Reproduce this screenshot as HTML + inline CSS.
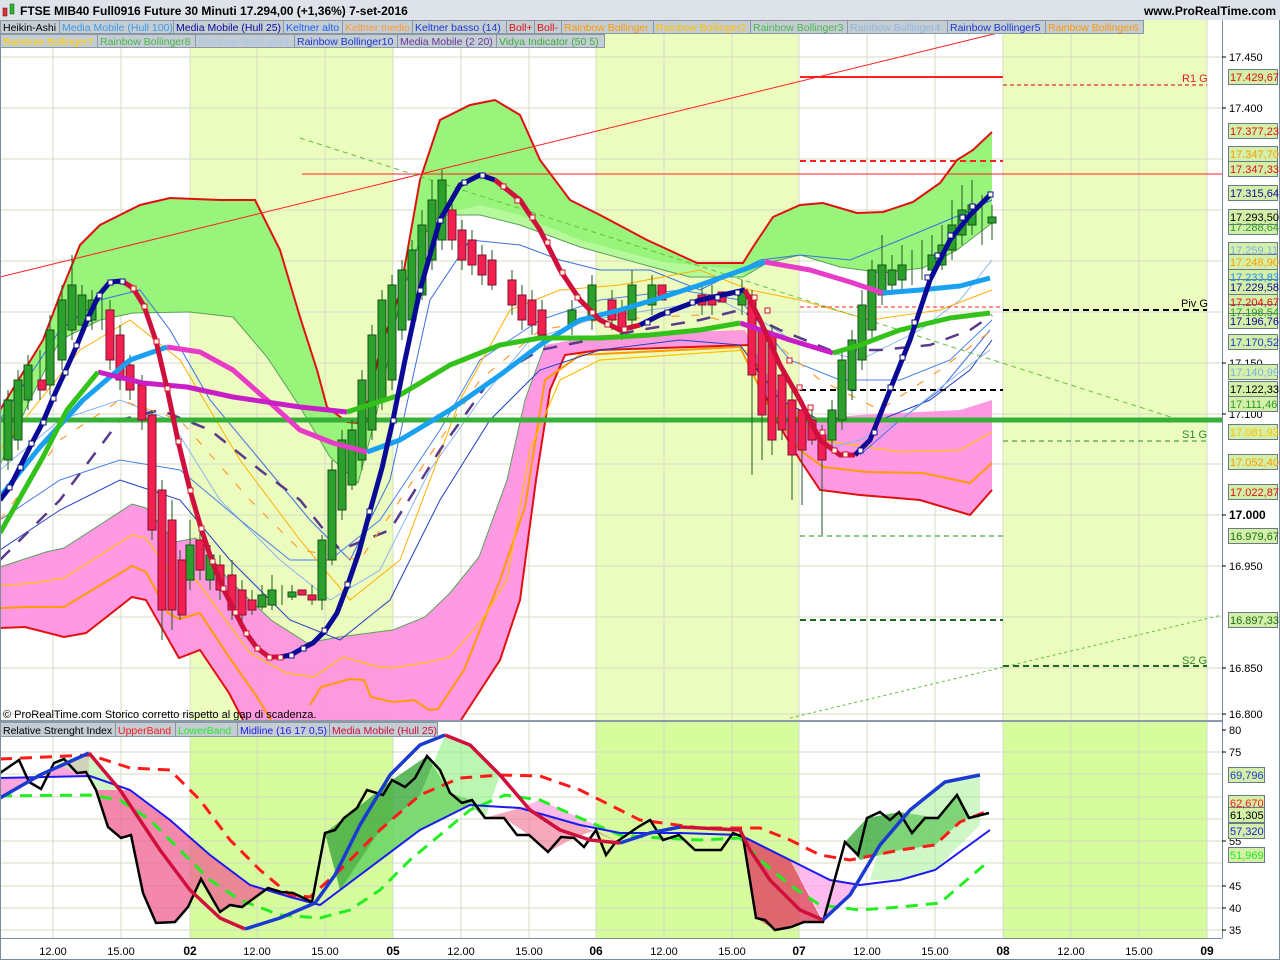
<!DOCTYPE html>
<html><head><meta charset="utf-8"><style>
body{margin:0;background:#fff;width:1280px;height:960px;overflow:hidden;font-family:"Liberation Sans",sans-serif}
svg{display:block}
</style></head><body>
<svg width="1280" height="960" viewBox="0 0 1280 960" xmlns="http://www.w3.org/2000/svg" font-family="Liberation Sans, sans-serif">
<rect width="1280" height="960" fill="#fff"/>
<g fill="#ecfcbe">
<rect x="190" y="20" width="203" height="700"/><rect x="596" y="20" width="203" height="700"/><rect x="1003" y="20" width="204" height="700"/>
</g>
<g fill="#d6fc9e">
<rect x="190" y="722" width="203" height="216"/><rect x="596" y="722" width="203" height="216"/><rect x="1003" y="722" width="204" height="216"/>
</g>
<g stroke="#d4dcc4" stroke-width="1">
<path d="M53 20V938M121 20V938M190 20V938M257 20V938M325 20V938M393 20V938M461 20V938M529 20V938M596 20V938M664 20V938M732 20V938M799 20V938M867 20V938M935 20V938M1003 20V938M1071 20V938M1139 20V938M1207 20V938"/>
<path d="M0 57H1222M0 108H1222M0 159H1222M0 210H1222M0 261H1222M0 312H1222M0 363H1222M0 414H1222M0 464H1222M0 515H1222M0 566H1222M0 617H1222M0 668H1222M0 714H1222"/>
<path d="M0 752H1222M0 774H1222M0 797H1222M0 819H1222M0 841H1222M0 863H1222M0 886H1222M0 908H1222M0 930H1222"/>
</g>
<path d="M0 410 L43 340 L63 287 L80 245 L100 225 L140 205 L170 198 L220 200 L255 200 L280 250 L300 317 L317 370 L327 407 L347 422 L358 423 L370 397 L380 350 L400 293 L420 180 L440 120 L470 105 L495 100 L520 115 L540 160 L570 200 L600 215 L647 240 L697 263 L743 263 L753 247 L773 217 L800 205 L823 203 L857 213 L883 212 L913 202 L940 183 L957 160 L973 150 L992 132 L992 223 L957 250 L923 268 L883 273 L840 267 L800 255 L767 263 L743 277 L690 277 L663 270 L580 247 L520 225 L480 215 L440 215 L420 240 L400 300 L380 400 L367 450 L358 483 L330 457 L300 407 L267 357 L233 317 L190 312 L133 313 L100 320 L60 340 L30 400 L0 465 Z" fill="#98f47a"/>
<path d="M440 215 L480 205 L520 215 L580 240 L663 262 L743 270 L743 277 L690 277 L663 270 L580 247 L520 225 L480 215 Z" fill="#c8fcb0" opacity="0.6"/>
<path d="M0 410 L43 340 L63 287 L80 245 L100 225 L140 205 L170 198 L220 200 L255 200 L280 250 L300 317 L317 370 L327 407 L347 422 L358 423 L370 397 L380 350 L400 293 L420 180 L440 120 L470 105 L495 100 L520 115 L540 160 L570 200 L600 215 L647 240 L697 263 L743 263 L753 247 L773 217 L800 205 L823 203 L857 213 L883 212 L913 202 L940 183 L957 160 L973 150 L992 132" fill="none" stroke="#e01010" stroke-width="2"/>
<path d="M0 465 L30 400 L60 340 L100 320 L133 313 L190 312 L233 317 L267 357 L300 407 L330 457 L358 483 L367 450 L380 400 L400 300 L420 240 L440 215 L480 215 L520 225 L580 247 L663 270 L690 277 L743 277 L767 263 L800 255 L840 267 L883 273 L923 268 L957 250 L992 223" fill="none" stroke="#5aa05a" stroke-width="1"/>
<!-- pink lower area -->
<path d="M0 567 L46 552 L64 548 L132 504 L146 508 L175 542 L196 538 L229 580 L271 620 L307 643 L339 637 L393 630 L425 617 L450 593 L479 557 L507 480 L525 400 L545 345 L600 335 L745 330 L770 380 L800 420 L860 415 L960 410 L992 400 L992 490 L970 515 L920 500 L860 495 L820 490 L800 460 L770 410 L750 345 L600 350 L565 355 L550 390 L536 480 L520 600 L500 660 L461 720 L243 720 L229 693 L200 650 L179 658 L146 600 L132 597 L86 633 L64 637 L25 627 L0 628 Z" fill="#ff8ee0" opacity="0.9"/>
<path d="M0 567 L46 552 L64 548 L132 504 L146 508 L175 542 L196 538 L229 580 L271 620 L307 643 L339 637 L393 630 L425 617 L450 593 L479 557 L507 480 L525 400 L545 345" fill="none" stroke="#5aa05a" stroke-width="1"/>
<path d="M0 628 L25 627 L64 637 L86 633 L132 597 L146 600 L179 658 L200 650 L229 693 L243 720" fill="none" stroke="#e01010" stroke-width="2"/>
<path d="M461 720 L500 660 L520 600 L536 480 L550 390 L565 355 L600 350 L750 345 L770 410 L800 460 L820 490 L860 495 L920 500 L970 515 L992 490" fill="none" stroke="#e01010" stroke-width="2"/>
<path d="M0 608 L29 607 L64 607 L132 566 L146 572 L168 613 L179 619 L200 613 L229 657 L257 697 L271 720" fill="none" stroke="#ff9a00" stroke-width="2"/>
<path d="M310 705 L321 687 L350 679 L364 680 L371 697 L393 702 L414 700 L429 710 L438 709 L464 670 L500 580 L525 507 L545 380 L580 355 L740 347 L767 403 L800 450 L823 467 L867 472 L923 473 L970 483 L992 463" fill="none" stroke="#ff9a00" stroke-width="2"/>
<path d="M0 586 L32 583 L64 578 L132 535 L146 538 L175 580 L196 580 L250 653 L286 673 L314 677 L343 657 L379 667 L393 668 L429 662 L450 657 L482 620 L507 580 L530 450 L560 380 L600 360 L745 350 L780 400 L820 440 L900 452 L960 450 L992 432" fill="none" stroke="#ffc000" stroke-width="1.2"/>
<g fill="none" stroke-width="1">
<path d="M0 420 L60 330 L100 300 L140 290 L170 330 L210 400 L260 460 L310 520 L350 560 L390 480 L430 300 L470 240 L520 245 L560 260 L600 270 L650 270 L700 290 L760 260 L800 255 L850 260 L900 240 L960 215 L992 200" stroke="#3a70e0"/>
<path d="M0 470 L60 420 L120 400 L170 420 L220 500 L280 560 L330 600 L380 570 L430 470 L480 400 L530 340 L590 320 L650 310 L720 300 L760 320 L800 345 L860 360 L920 330 L960 300 L992 260" stroke="#8ab4f0"/>
<path d="M0 550 L60 510 L120 480 L180 500 L230 560 L290 620 L340 640 L390 600 L440 500 L490 420 L540 370 L600 350 L680 340 L740 345 L780 400 L820 420 L880 420 L930 400 L970 370 L992 340" stroke="#2040c0"/>
<path d="M0 520 L60 480 L120 460 L180 470 L240 520 L290 560 L330 560 L380 520 L440 430 L480 360 L540 320 L600 300 L680 290 L740 300 L790 360 L840 380 L900 380 L950 360 L992 320" stroke="#4a80e8"/>
<path d="M0 450 L80 350 L130 320 L180 360 L240 460 L300 540 L350 600 L400 560 L460 400 L510 310 L560 290 L620 285 L700 270 L750 290 L800 300 L870 320 L940 310 L992 290" stroke="#ffb000"/>
<path d="M860 455 L900 420 L940 390 L990 330" stroke="#3a70e0"/>
<path d="M820 450 L860 440 L900 420 L950 380 L990 350" stroke="#8ab4f0"/>
</g>
<path d="M0 560 L60 500 L120 420 L160 410 L210 430 L260 470 L300 500 L340 550 L390 530 L440 450 L490 380 L540 350 L590 340 L640 330 L700 320 L740 310 L780 330 L830 350 L880 350 L930 345 L970 330 L992 315" fill="none" stroke="#5a3a8a" stroke-width="2.5" stroke-dasharray="14 12"/>
<path d="M0 520 L60 440 L120 400 L180 420 L250 500 L300 550 L360 560 L420 470 L480 380 L540 330 L600 320 L700 315 L760 330 L820 380 L880 410 L940 370 L992 330" fill="none" stroke="#ff9a30" stroke-width="1.2" stroke-dasharray="8 12"/>
<line x1="0" y1="277" x2="1010" y2="30" stroke="#ff2020" stroke-width="1"/>
<line x1="302" y1="174" x2="1222" y2="174" stroke="#ff2020" stroke-width="1"/>
<line x1="300" y1="138" x2="1180" y2="420" stroke="#60c040" stroke-width="1" stroke-dasharray="5 4"/>
<line x1="790" y1="718" x2="1222" y2="615" stroke="#60c040" stroke-width="1" stroke-dasharray="3 3"/>
<line x1="800" y1="77" x2="1003" y2="77" stroke="#ff2020" stroke-width="2"/>
<line x1="1003" y1="85" x2="1207" y2="85" stroke="#c00" stroke-width="1" stroke-dasharray="4 3"/>
<line x1="800" y1="161" x2="1003" y2="161" stroke="#ff2020" stroke-width="2" stroke-dasharray="6 4"/>
<line x1="800" y1="307" x2="1003" y2="307" stroke="#ff2020" stroke-width="1" stroke-dasharray="4 3"/>
<line x1="1003" y1="310" x2="1207" y2="310" stroke="#000" stroke-width="2" stroke-dasharray="6 4"/>
<line x1="800" y1="390" x2="1003" y2="390" stroke="#000" stroke-width="2" stroke-dasharray="6 4"/>
<line x1="1003" y1="441" x2="1207" y2="441" stroke="#2a8a2a" stroke-width="1" stroke-dasharray="5 4"/>
<line x1="800" y1="536" x2="1003" y2="536" stroke="#2a8a2a" stroke-width="1" stroke-dasharray="5 4"/>
<line x1="800" y1="620" x2="1003" y2="620" stroke="#1a6a1a" stroke-width="2" stroke-dasharray="6 4"/>
<line x1="1003" y1="666" x2="1207" y2="666" stroke="#1a6a1a" stroke-width="2" stroke-dasharray="6 4"/>
<line x1="0" y1="420" x2="1222" y2="420" stroke="#36b036" stroke-width="5"/>
<g font-size="11">
<text x="1182" y="82" fill="#e02020">R1 G</text>
<text x="1181" y="307" fill="#000">Piv G</text>
<text x="1182" y="438" fill="#2a8a2a">S1 G</text>
<text x="1182" y="664" fill="#2a8a2a">S2 G</text>
</g>
<g stroke="#1f5a1f" stroke-width="1">
<path d="M8 390V470M18 370V450M28 355V410M40 350V400M50 315V395M62 285V370M72 255V340M82 285V335M92 290V330M102 290V330M110 300V370M120 325V390M130 355V400M142 375V430M152 410V540M162 480V640M172 500V630M180 550V620M190 520V590M200 530V580M210 545V590M220 555V600M232 560V620M242 580V625M252 590V615M262 585V610M272 575V610M282 585V605M292 585V600M312 585V605M322 535V610M332 460V565M342 430V520M352 420V490M362 370V470M372 325V440M382 290V410M392 275V390M402 260V340M412 240V325M422 210V300M432 180V270M442 170V250M452 200V250M462 220V270M472 230V275M482 245V285M492 250V290M512 270V315M522 285V330M532 290V335M542 300V345M572 300V335M592 275V330M612 290V330M622 300V340M632 270V330M652 275V315M702 285V315M712 285V315M742 280V315M752 290V475M762 320V460M772 325V455M782 365V440M792 390V500M802 400V505M812 410V445M822 425V535M832 400V450M842 350V430M852 330V400M862 290V370M872 260V340M882 235V305M892 255V295M902 245V290M912 250V285M922 240V280M932 235V275M942 225V270M952 200V260M962 185V245M972 180V235M982 195V245M992 205V240"/>
</g>
<g fill="#2ca02c" stroke="#145214" stroke-width="1">
<rect x="4" y="400" width="8" height="60"/><rect x="14" y="380" width="8" height="60"/><rect x="24" y="365" width="8" height="35"/><rect x="46" y="330" width="8" height="55"/><rect x="58" y="300" width="8" height="60"/><rect x="68" y="285" width="8" height="45"/><rect x="78" y="295" width="8" height="30"/><rect x="88" y="300" width="8" height="20"/>
<rect x="186" y="545" width="8" height="35"/><rect x="206" y="555" width="8" height="25"/><rect x="258" y="595" width="8" height="12"/><rect x="268" y="590" width="8" height="15"/><rect x="288" y="592" width="8" height="5"/><rect x="318" y="540" width="8" height="60"/><rect x="328" y="470" width="8" height="90"/><rect x="338" y="440" width="8" height="70"/><rect x="348" y="430" width="8" height="55"/><rect x="358" y="380" width="8" height="80"/><rect x="368" y="335" width="8" height="95"/><rect x="378" y="300" width="8" height="100"/><rect x="388" y="285" width="8" height="95"/><rect x="398" y="270" width="8" height="60"/><rect x="408" y="250" width="8" height="70"/><rect x="418" y="225" width="8" height="70"/><rect x="428" y="200" width="8" height="60"/><rect x="438" y="180" width="8" height="60"/>
<rect x="568" y="310" width="8" height="15"/><rect x="588" y="285" width="8" height="35"/><rect x="628" y="285" width="8" height="35"/><rect x="648" y="285" width="8" height="20"/><rect x="738" y="290" width="8" height="15"/>
<rect x="828" y="410" width="8" height="30"/><rect x="838" y="360" width="8" height="60"/><rect x="848" y="340" width="8" height="50"/><rect x="858" y="305" width="8" height="55"/><rect x="868" y="270" width="8" height="60"/><rect x="878" y="265" width="8" height="30"/><rect x="888" y="270" width="8" height="15"/><rect x="898" y="265" width="8" height="15"/><rect x="928" y="255" width="8" height="15"/><rect x="938" y="245" width="8" height="20"/><rect x="948" y="225" width="8" height="25"/><rect x="958" y="210" width="8" height="25"/><rect x="968" y="205" width="8" height="20"/><rect x="988" y="217" width="8" height="6"/>
</g>
<g fill="#f2204e" stroke="#801030" stroke-width="1">
<rect x="38" y="380" width="8" height="10"/><rect x="106" y="310" width="8" height="50"/><rect x="116" y="335" width="8" height="45"/><rect x="126" y="365" width="8" height="25"/><rect x="138" y="385" width="8" height="35"/><rect x="148" y="415" width="8" height="115"/><rect x="158" y="490" width="8" height="120"/><rect x="168" y="520" width="8" height="90"/><rect x="178" y="560" width="8" height="55"/><rect x="196" y="540" width="8" height="30"/><rect x="216" y="565" width="8" height="25"/><rect x="228" y="575" width="8" height="35"/><rect x="238" y="590" width="8" height="25"/><rect x="248" y="600" width="8" height="10"/><rect x="298" y="590" width="8" height="5"/><rect x="308" y="595" width="8" height="5"/>
<rect x="448" y="210" width="8" height="30"/><rect x="458" y="230" width="8" height="30"/><rect x="468" y="240" width="8" height="25"/><rect x="478" y="255" width="8" height="20"/><rect x="488" y="260" width="8" height="25"/><rect x="508" y="280" width="8" height="25"/><rect x="518" y="295" width="8" height="25"/><rect x="528" y="300" width="8" height="25"/><rect x="538" y="310" width="8" height="25"/><rect x="608" y="300" width="8" height="20"/><rect x="618" y="310" width="8" height="20"/><rect x="658" y="285" width="8" height="15"/><rect x="698" y="295" width="8" height="10"/><rect x="708" y="295" width="8" height="10"/><rect x="718" y="292" width="8" height="10"/>
<rect x="748" y="295" width="8" height="80"/><rect x="758" y="330" width="8" height="85"/><rect x="768" y="335" width="8" height="105"/><rect x="778" y="375" width="8" height="55"/><rect x="788" y="400" width="8" height="55"/><rect x="798" y="410" width="8" height="40"/><rect x="808" y="420" width="8" height="20"/><rect x="818" y="435" width="8" height="25"/>
</g>
<g fill="none" stroke-width="5" stroke-linejoin="round">
<path d="M0 497 L40 447 L83 400 L130 360 L167 347" stroke="#1aa0f0"/>
<path d="M167 347 L200 352 L233 370 L267 400 L300 430 L333 443 L367 452" stroke="#e83cc8"/>
<path d="M367 452 L400 440 L450 410 L500 375 L540 345 L580 320 L620 310 L660 298 L700 285 L765 262" stroke="#1aa0f0"/>
<path d="M765 262 L810 270 L850 282 L883 293" stroke="#e83cc8"/>
<path d="M883 293 L920 290 L960 286 L990 278" stroke="#1aa0f0"/>
<path d="M98 372 L143 383 L187 387 L233 397 L300 407 L347 412" stroke="#c81ec8"/>
<path d="M740 323 L790 340 L833 353" stroke="#c81ec8"/>
<path d="M0 533 L43 457 L67 410 L98 372" stroke="#33c21a"/>
<path d="M347 412 L400 395 L450 365 L500 345 L540 338 L600 338 L650 335 L700 330 L740 323" stroke="#33c21a"/>
<path d="M833 353 L860 345 L900 330 L950 318 L990 313" stroke="#33c21a"/>
</g>
<g fill="none" stroke-width="5" stroke-linejoin="round">
<path d="M0 500 L10 487 L20 467 L32 443 L43 422 L53 398 L65 372 L77 345 L88 318 L99 295 L110 282 L122 281" stroke="#0a0a96"/>
<path d="M122 281 L133 288 L144 306 L156 341 L167 388 L178 441 L190 490 L201 528 L212 561 L223 588 L235 612 L246 633 L257 648 L269 657 L280 657" stroke="#d0103c"/>
<path d="M280 657 L291 655 L303 648 L313 643 L325 631 L337 613 L348 584 L359 552 L370 511 L382 468 L393 420 L405 360 L420 290 L440 220 L460 185 L480 175 L495 180" stroke="#0a0a96"/>
<path d="M495 180 L520 200 L540 230 L560 270 L580 300 L600 320 L620 330 L640 325" stroke="#d0103c"/>
<path d="M640 325 L660 315 L700 300 L745 290" stroke="#0a0a96"/>
<path d="M745 290 L760 320 L780 365 L800 400 L820 440 L840 455 L855 455" stroke="#d0103c"/>
<path d="M855 455 L870 440 L890 390 L910 340 L930 280 L950 240 L970 215 L990 195" stroke="#0a0a96"/>
</g>
<g fill="#ffffe0" stroke="#0a0a96" stroke-width="1">
<rect x="7" y="485" width="5" height="5"/><rect x="18" y="465" width="5" height="5"/><rect x="29" y="441" width="5" height="5"/><rect x="41" y="420" width="5" height="5"/><rect x="51" y="396" width="5" height="5"/><rect x="63" y="370" width="5" height="5"/><rect x="74" y="343" width="5" height="5"/><rect x="86" y="316" width="5" height="5"/><rect x="97" y="293" width="5" height="5"/><rect x="108" y="280" width="5" height="5"/><rect x="120" y="279" width="5" height="5"/>
<rect x="289" y="653" width="5" height="5"/><rect x="301" y="646" width="5" height="5"/><rect x="322" y="628" width="5" height="5"/><rect x="345" y="582" width="5" height="5"/><rect x="367" y="509" width="5" height="5"/><rect x="391" y="418" width="5" height="5"/><rect x="418" y="288" width="5" height="5"/><rect x="438" y="218" width="5" height="5"/><rect x="462" y="180" width="5" height="5"/><rect x="480" y="173" width="5" height="5"/>
<rect x="645" y="320" width="5" height="5"/><rect x="665" y="310" width="5" height="5"/><rect x="690" y="300" width="5" height="5"/><rect x="715" y="295" width="5" height="5"/><rect x="735" y="290" width="5" height="5"/>
<rect x="858" y="448" width="5" height="5"/><rect x="872" y="430" width="5" height="5"/><rect x="888" y="385" width="5" height="5"/><rect x="900" y="355" width="5" height="5"/><rect x="912" y="320" width="5" height="5"/><rect x="925" y="275" width="5" height="5"/><rect x="935" y="253" width="5" height="5"/><rect x="948" y="233" width="5" height="5"/><rect x="960" y="215" width="5" height="5"/><rect x="970" y="204" width="5" height="5"/><rect x="988" y="192" width="5" height="5"/>
</g>
<g fill="#ffffe0" stroke="#d0103c" stroke-width="1">
<rect x="131" y="286" width="5" height="5"/><rect x="142" y="304" width="5" height="5"/><rect x="154" y="339" width="5" height="5"/><rect x="165" y="386" width="5" height="5"/><rect x="176" y="439" width="5" height="5"/><rect x="188" y="488" width="5" height="5"/><rect x="199" y="526" width="5" height="5"/><rect x="210" y="559" width="5" height="5"/><rect x="221" y="586" width="5" height="5"/><rect x="233" y="610" width="5" height="5"/><rect x="244" y="631" width="5" height="5"/><rect x="255" y="646" width="5" height="5"/><rect x="267" y="655" width="5" height="5"/><rect x="278" y="655" width="5" height="5"/>
<rect x="501" y="184" width="5" height="5"/><rect x="515" y="198" width="5" height="5"/><rect x="530" y="215" width="5" height="5"/><rect x="545" y="240" width="5" height="5"/><rect x="560" y="270" width="5" height="5"/><rect x="575" y="295" width="5" height="5"/><rect x="590" y="310" width="5" height="5"/><rect x="605" y="322" width="5" height="5"/><rect x="622" y="327" width="5" height="5"/>
<rect x="752" y="295" width="5" height="5"/><rect x="765" y="308" width="5" height="5"/><rect x="787" y="358" width="5" height="5"/><rect x="797" y="385" width="5" height="5"/><rect x="808" y="405" width="5" height="5"/><rect x="820" y="430" width="5" height="5"/><rect x="832" y="448" width="5" height="5"/><rect x="843" y="452" width="5" height="5"/>
</g>
<text x="3" y="718" font-size="11" fill="#000">© ProRealTime.com  Storico corretto rispetto al gap di scadenza.</text>
<rect x="0" y="720" width="1222" height="2" fill="#8a9aa8"/>
<path d="M0 798 L89 753 L89 776 L0 778 Z" fill="#ff80d0" opacity="0.7"/>
<path d="M54 763 L89 753 L120 790 L130 790 L96 790 L86 772 L77 773 Z" fill="#b0f0a0" opacity="0.6"/>
<path d="M96 790 L108 827 L121 838 L131 835 L143 893 L156 923 L175 922 L188 907 L201 879 L220 912 L230 905 L242 907 L268 888 L281 892 L293 893 L312 902 L290 897 L250 885 L210 855 L170 820 L130 790 Z" fill="#f06090" opacity="0.75"/>
<path d="M325 833 L357 808 L392 780 L427 756 L450 793 L472 800 L485 818 L470 805 L420 830 L380 860 L340 890 Z" fill="#3aa83a" opacity="0.8"/>
<path d="M340 890 L380 830 L420 795 L445 735 L470 745 L500 775 L485 818 L470 805 L420 830 L380 860 Z" fill="#90f080" opacity="0.6"/>
<path d="M485 818 L504 818 L529 835 L548 852 L574 838 L596 830 L620 843 L580 825 L520 808 Z" fill="#f07090" opacity="0.6"/>
<path d="M520 808 L580 825 L620 835 L580 818 L540 800 Z" fill="#ff9ee0" opacity="0.7"/>
<path d="M743 837 L756 918 L775 930 L804 922 L823 922 L790 860 L760 845 Z" fill="#e04060" opacity="0.8"/>
<path d="M790 860 L823 920 L850 895 L860 885 L830 880 Z" fill="#ff9ee8" opacity="0.7"/>
<path d="M845 842 L867 818 L899 812 L938 818 L957 795 L969 818 L960 822 L935 845 L900 850 L860 860 Z" fill="#3aa83a" opacity="0.8"/>
<path d="M880 845 L910 810 L945 782 L980 775 L980 825 L935 870 L900 880 L870 880 Z" fill="#a0f090" opacity="0.5"/>
<path d="M0 759 L90 755 L130 768 L170 770 L200 800 L230 840 L260 870 L290 895 L310 897 L340 870 L380 830 L420 795 L460 778 L500 775 L540 776 L580 790 L610 805 L640 820 L700 828 L760 828 L790 840 L820 855 L850 860 L900 850 L935 845 L960 822 L990 810" fill="none" stroke="#ff1a1a" stroke-width="3" stroke-dasharray="12 8"/>
<path d="M0 796 L90 795 L120 800 L150 820 L180 850 L210 880 L240 900 L280 915 L320 918 L350 910 L380 890 L410 860 L440 835 L470 810 L505 795 L540 800 L580 818 L620 835 L660 838 L700 840 L740 838 L760 860 L790 885 L820 905 L860 910 L900 907 L940 903 L990 860" fill="none" stroke="#22ee22" stroke-width="3" stroke-dasharray="12 8"/>
<path d="M0 778 L90 776 L130 790 L170 820 L210 855 L250 885 L290 897 L320 905 L340 890 L380 860 L420 830 L470 805 L520 808 L580 825 L620 833 L680 833 L740 835 L790 860 L830 880 L860 885 L900 880 L935 870 L990 830" fill="none" stroke="#1a1aee" stroke-width="2"/>
<path d="M0 773 L19 760 L29 782 L41 789 L54 763 L64 759 L77 773 L86 772 L96 790 L108 827 L121 838 L131 835 L143 893 L156 923 L175 922 L188 907 L201 879 L220 912 L230 905 L242 907 L268 888 L281 892 L293 893 L312 902 L325 833 L335 830 L344 818 L357 808 L367 790 L383 795 L392 780 L405 787 L415 778 L427 756 L440 770 L450 793 L462 803 L472 800 L485 818 L504 818 L517 835 L529 835 L548 852 L561 837 L574 838 L584 847 L596 830 L606 855 L615 843 L638 827 L650 820 L663 840 L679 835 L695 850 L721 850 L733 833 L743 837 L756 918 L765 920 L775 930 L791 927 L804 922 L823 922 L845 842 L858 855 L867 818 L880 812 L890 820 L899 812 L912 833 L925 818 L938 818 L957 795 L969 818 L989 813" fill="none" stroke="#000" stroke-width="2.5"/>
<g fill="none" stroke-width="3.5" stroke-linejoin="round">
<path d="M0 798 L40 775 L89 753" stroke="#1a3ad0"/>
<path d="M89 753 L120 790 L160 850 L190 890 L220 918 L245 929" stroke="#d0103c"/>
<path d="M245 929 L280 918 L315 903 L335 875 L360 825 L390 775 L420 745 L445 735" stroke="#1a3ad0"/>
<path d="M445 735 L470 745 L500 775 L530 810 L560 830 L590 840 L620 843" stroke="#d0103c"/>
<path d="M620 843 L650 833 L680 827" stroke="#1a3ad0"/>
<path d="M680 827 L740 830 L750 850 L770 880 L800 910 L823 920" stroke="#d0103c"/>
<path d="M823 920 L850 895 L880 845 L910 810 L945 782 L980 775" stroke="#1a3ad0"/>
</g>
<rect x="1222" y="20" width="58" height="940" fill="#fff"/>
<line x1="1222.5" y1="20" x2="1222.5" y2="938" stroke="#7a8a98"/>
<rect x="0" y="938" width="1280" height="22" fill="#fff"/>
<line x1="0" y1="938.5" x2="1222" y2="938.5" stroke="#7a8a98"/>
<rect x="0.5" y="0.5" width="1279" height="959" fill="none" stroke="#7a8a98"/>
<g font-size="11" fill="#000">
<text x="1229" y="61">17.450</text><text x="1229" y="112">17.400</text><text x="1229" y="367">17.150</text><text x="1229" y="418">17.100</text><text x="1229" y="519" font-weight="bold" font-size="12">17.000</text><text x="1229" y="570">16.950</text><text x="1229" y="672">16.850</text><text x="1229" y="718">16.800</text>
<text x="1229" y="734">80</text><text x="1229" y="756">75</text><text x="1229" y="845">55</text><text x="1229" y="890">45</text><text x="1229" y="912">40</text><text x="1229" y="934">35</text>
</g>
<g stroke="#000"><path d="M1222 57h4M1222 108h4M1222 363h4M1222 414h4M1222 515h4M1222 566h4M1222 668h4M1222 714h4M1222 730h4M1222 752h4M1222 841h4M1222 886h4M1222 908h4M1222 930h4"/></g>
<g stroke="#6a7a88" stroke-width="1" fill="#d4f0a8">
<rect x="1228.5" y="69.5" width="49" height="15"/><rect x="1228.5" y="123.5" width="49" height="15"/><rect x="1228.5" y="146.5" width="49" height="15"/><rect x="1228.5" y="161.5" width="49" height="15"/><rect x="1228.5" y="185.5" width="49" height="15"/><rect x="1228.5" y="219.5" width="49" height="15"/><rect x="1228.5" y="209.5" width="49" height="15"/><rect x="1228.5" y="242.5" width="49" height="15"/><rect x="1228.5" y="254.5" width="49" height="15"/><rect x="1228.5" y="269.5" width="49" height="15"/><rect x="1228.5" y="279.5" width="49" height="15"/><rect x="1228.5" y="294.5" width="49" height="15"/><rect x="1228.5" y="304.5" width="49" height="15"/><rect x="1228.5" y="313.5" width="49" height="15"/><rect x="1228.5" y="334.5" width="49" height="15"/><rect x="1228.5" y="364.5" width="49" height="15"/><rect x="1228.5" y="381.5" width="49" height="15"/><rect x="1228.5" y="396.5" width="49" height="15"/><rect x="1228.5" y="424.5" width="49" height="15"/><rect x="1228.5" y="454.5" width="49" height="15"/><rect x="1228.5" y="484.5" width="49" height="15"/><rect x="1228.5" y="528.5" width="49" height="15"/><rect x="1228.5" y="612.5" width="49" height="15"/>
<rect x="1228.5" y="767.5" width="36" height="15"/><rect x="1228.5" y="795.5" width="36" height="15"/><rect x="1228.5" y="807.5" width="36" height="15"/><rect x="1228.5" y="823.5" width="36" height="15"/><rect x="1228.5" y="847.5" width="36" height="15"/>
</g>
<g font-size="11">
<text x="1230" y="81" fill="#e01010">17.429,67</text><text x="1230" y="135" fill="#e01010">17.377,23</text><text x="1230" y="158" fill="#ff9a00">17.347,70</text><text x="1230" y="173" fill="#e01010">17.347,33</text><text x="1230" y="197" fill="#0a0a96">17.315,64</text><text x="1230" y="231" fill="#2a9a2a">17.288,64</text><text x="1230" y="221" fill="#000">17.293,50</text><text x="1230" y="254" fill="#80b0e8">17.259,11</text><text x="1230" y="266" fill="#ff9a00">17.248,90</text><text x="1230" y="281" fill="#1a90f0">17.233,83</text><text x="1230" y="291" fill="#0a0a96">17.229,58</text><text x="1230" y="306" fill="#e01010">17.204,67</text><text x="1230" y="316" fill="#2a9a2a">17.198,54</text><text x="1230" y="325" fill="#0a0a96">17.196,76</text><text x="1230" y="346" fill="#1a3ad0">17.170,52</text><text x="1230" y="376" fill="#80b0e8">17.140,99</text><text x="1230" y="393" fill="#000">17.122,33</text><text x="1230" y="408" fill="#2a9a2a">17.111,46</text><text x="1230" y="436" fill="#ffc000">17.081,93</text><text x="1230" y="466" fill="#ff9a00">17.052,40</text><text x="1230" y="496" fill="#e01010">17.022,87</text><text x="1230" y="540" fill="#1a6a1a">16.979,67</text><text x="1230" y="624" fill="#1a6a1a">16.897,33</text>
<text x="1230" y="779" fill="#1a3ad0">69,796</text><text x="1230" y="807" fill="#ff1a1a">62,670</text><text x="1230" y="819" fill="#000">61,305</text><text x="1230" y="835" fill="#1a1aee">57,320</text><text x="1230" y="859" fill="#22ee22">51,969</text>
</g>
<g font-size="11" fill="#000" text-anchor="middle">
<text x="53" y="955">12.00</text><text x="121" y="955">15.00</text><text x="190" y="955" font-weight="bold" font-size="12">02</text><text x="257" y="955">12.00</text><text x="325" y="955">15.00</text><text x="393" y="955" font-weight="bold" font-size="12">05</text><text x="461" y="955">12.00</text><text x="529" y="955">15.00</text><text x="596" y="955" font-weight="bold" font-size="12">06</text><text x="664" y="955">12.00</text><text x="732" y="955">15.00</text><text x="799" y="955" font-weight="bold" font-size="12">07</text><text x="867" y="955">12.00</text><text x="935" y="955">15.00</text><text x="1003" y="955" font-weight="bold" font-size="12">08</text><text x="1071" y="955">12.00</text><text x="1139" y="955">15.00</text><text x="1207" y="955" font-weight="bold" font-size="12">09</text>
</g>
<rect x="0" y="0" width="1280" height="20" fill="#dde3e9"/>
<rect x="3" y="8" width="4" height="8" fill="#e03040" stroke="#600" stroke-width="0.5"/>
<rect x="10" y="4" width="4" height="10" fill="#30b030" stroke="#060" stroke-width="0.5"/>
<text x="20" y="15" font-size="12" font-weight="bold" fill="#000">FTSE MIB40 Full0916 Future   30 Minuti   17.294,00 (+1,36%)   7-set-2016</text>
<text x="1276" y="15" font-size="12" font-weight="bold" fill="#000" text-anchor="end">www.ProRealTime.com</text>
<g font-size="10.5">
<g fill="#c4ccd4" stroke="#8a98a4"><rect x="0.5" y="20.5" width="59" height="13"/><rect x="59.5" y="20.5" width="114" height="13"/><rect x="173.5" y="20.5" width="110" height="13"/><rect x="283.5" y="20.5" width="59" height="13"/><rect x="342.5" y="20.5" width="70" height="13"/><rect x="412.5" y="20.5" width="94" height="13"/><rect x="506.5" y="20.5" width="28" height="13"/><rect x="534.5" y="20.5" width="27" height="13"/><rect x="561.5" y="20.5" width="92" height="13"/><rect x="653.5" y="20.5" width="97" height="13"/><rect x="750.5" y="20.5" width="97" height="13"/><rect x="847.5" y="20.5" width="100" height="13"/><rect x="947.5" y="20.5" width="98" height="13"/><rect x="1045.5" y="20.5" width="98" height="13"/>
<rect x="0.5" y="34.5" width="97" height="13"/><rect x="97.5" y="34.5" width="98" height="13"/><rect x="195.5" y="34.5" width="99" height="13"/><rect x="294.5" y="34.5" width="103" height="13"/><rect x="397.5" y="34.5" width="99" height="13"/><rect x="496.5" y="34.5" width="108" height="13"/></g>
<text x="3" y="31" fill="#000">Heikin-Ashi</text><text x="62" y="31" fill="#3a9ae8">Media Mobile (Hull 100)</text><text x="176" y="31" fill="#0a0a96">Media Mobile (Hull 25)</text><text x="286" y="31" fill="#1a60f0">Keltner alto</text><text x="345" y="31" fill="#ff9a30">Keltner medio</text><text x="415" y="31" fill="#1a3ad0">Keltner basso (14)</text><text x="509" y="31" fill="#e01010">Boll+</text><text x="537" y="31" fill="#e01010">Boll-</text><text x="564" y="31" fill="#ff9a00">Rainbow Bollinger</text><text x="656" y="31" fill="#ffc000">Rainbow Bollinger2</text><text x="753" y="31" fill="#4ab84a">Rainbow Bollinger3</text><text x="850" y="31" fill="#90b8e0">Rainbow Bollinger4</text><text x="950" y="31" fill="#1a3ad0">Rainbow Bollinger5</text><text x="1048" y="31" fill="#ff9a00">Rainbow Bollinger6</text>
<text x="3" y="45" fill="#ffd000">Rainbow Bollinger7</text><text x="100" y="45" fill="#4ab84a">Rainbow Bollinger8</text><text x="198" y="45" fill="#a8c8e8">Rainbow Bollinger9</text><text x="297" y="45" fill="#1a3ad0">Rainbow Bollinger10</text><text x="400" y="45" fill="#6a3a9a">Media Mobile (2 20)</text><text x="499" y="45" fill="#3ab03a">Vidya Indicator (50 5)</text>
</g>
<g font-size="10.5">
<g fill="#c4ccd4" stroke="#8a98a4"><rect x="0.5" y="722.5" width="115" height="14"/><rect x="115.5" y="722.5" width="60" height="14"/><rect x="175.5" y="722.5" width="62" height="14"/><rect x="237.5" y="722.5" width="92" height="14"/><rect x="329.5" y="722.5" width="108" height="14"/></g>
<text x="3" y="734" fill="#000">Relative Strenght Index</text><text x="118" y="734" fill="#ff1a1a">UpperBand</text><text x="178" y="734" fill="#22ee22">LowerBand</text><text x="240" y="734" fill="#1a1aee">Midline (16 17 0,5)</text><text x="332" y="734" fill="#d0103c">Media Mobile (Hull 25)</text>
</g>
</svg>
</body></html>
